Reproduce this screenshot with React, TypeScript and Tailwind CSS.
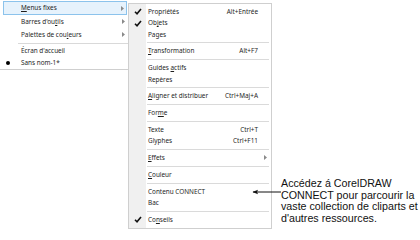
import React from "react";

type Item =
  | { kind: "sep" }
  | {
      kind: "item";
      label: React.ReactNode;
      check?: boolean;
      sc?: string;
      sub?: boolean;
    };

const U = ({ c }: { c: string }) => (
  <span className="underline underline-offset-[1px] decoration-[0.6px]">{c}</span>
);

const rightItems: Item[] = [
  { kind: "item", label: <>Propriétés</>, check: true, sc: "Alt+Entrée" },
  { kind: "item", label: <>Ob<U c="j" />ets</>, check: true },
  { kind: "item", label: <>Pages</> },
  { kind: "sep" },
  { kind: "item", label: <><U c="T" />ransformation</>, sc: "Alt+F7" },
  { kind: "sep" },
  { kind: "item", label: <>Guides <U c="a" />ctifs</> },
  { kind: "item", label: <>Repères</> },
  { kind: "sep" },
  { kind: "item", label: <><U c="A" />ligner et distribuer</>, sc: "Ctrl+Maj+A" },
  { kind: "sep" },
  { kind: "item", label: <>For<U c="m" />e</> },
  { kind: "sep" },
  { kind: "item", label: <>Texte</>, sc: "Ctrl+T" },
  { kind: "item", label: <>Glyphes</>, sc: "Ctrl+F11" },
  { kind: "sep" },
  { kind: "item", label: <><U c="E" />ffets</>, sub: true },
  { kind: "sep" },
  { kind: "item", label: <><U c="C" />ouleur</> },
  { kind: "sep" },
  { kind: "item", label: <>Contenu CONNECT</> },
  { kind: "item", label: <>Bac</> },
  { kind: "sep" },
  { kind: "item", label: <>Co<U c="n" />seils</>, check: true },
];

const Check = () => (
  <svg width="8" height="7" viewBox="0 0 8 7">
    <path d="M1 3.8 L3 5.8 L7 1" fill="none" stroke="#111" strokeWidth="1.6" />
  </svg>
);

const Tri = () => (
  <svg width="3" height="5" viewBox="0 0 3 5">
    <path d="M0 0 L3 2.5 L0 5 Z" fill="#8a8a8a" />
  </svg>
);

export default function App() {
  return (
    <div
      className="w-[420px] h-[240px] bg-white flex items-start overflow-hidden text-[#1e1e1e]"
      style={{ fontFamily: '"Noto Sans", "Open Sans", sans-serif' }}
    >
      {/* Left menu */}
      <div className="w-[128px] shrink-0 bg-white border-b border-[#cfcfcf] text-[6.4px] flex flex-col pt-[1px]">
        <div className="h-[14px] mx-[3px] mr-[1px] border border-[#8cc3ec] bg-[#e6f2fc] flex items-center pl-[17px] pr-[2px]">
          <span className="flex-1"><U c="M" />enus fixes</span>
          <Tri />
        </div>
        <div className="h-[13px] flex items-center pl-[21px] pr-[3px]">
          <span className="flex-1">Barres d'ou<U c="t" />ils</span>
          <Tri />
        </div>
        <div className="h-[13px] flex items-center pl-[21px] pr-[3px]">
          <span className="flex-1">Palettes de cou<U c="l" />eurs</span>
          <Tri />
        </div>
        <div className="h-[4px] flex items-center pl-[18px]">
          <div className="h-px w-full bg-[#d9d9d9]" />
        </div>
        <div className="h-[12px] flex items-center pl-[21px]">Écran d'accueil</div>
        <div className="h-[12px] flex items-center">
          <div className="w-[21px] flex justify-center pr-[5px]">
            <div className="w-[4px] h-[4px] rounded-full bg-black" />
          </div>
          <span>Sans nom-1*</span>
        </div>
      </div>

      {/* Right menu */}
      <div className="w-[144px] shrink-0 mt-[3px] border border-[#cfcfcf] bg-white text-[6.4px] flex">
        <div className="flex flex-col w-full">
          <div className="h-[2px] flex">
            <div className="w-[17px] bg-[#f0f0f0]" />
          </div>
          {rightItems.map((it, i) =>
            it.kind === "sep" ? (
              <div key={i} className="h-[5.4px] flex items-center">
                <div className="w-[17px] self-stretch bg-[#f0f0f0]" />
                <div className="flex-1 h-px bg-[#dadada] ml-[1px] mr-[2px]" />
              </div>
            ) : (
              <div key={i} className="h-[11.4px] flex items-center">
                <div className="w-[17px] self-stretch bg-[#f0f0f0] flex items-center justify-center pl-[1px]">
                  {it.check ? <Check /> : null}
                </div>
                <span className="flex-1 pl-[2px] whitespace-nowrap">{it.label}</span>
                {it.sc ? <span className="pr-[13px] whitespace-nowrap">{it.sc}</span> : null}
                {it.sub ? (
                  <span className="pr-[4px] flex items-center">
                    <Tri />
                  </span>
                ) : null}
              </div>
            )
          )}
          <div className="h-[2.5px] flex">
            <div className="w-[17px] bg-[#f0f0f0]" />
          </div>
        </div>
      </div>

      {/* Callout */}
      <div className="ml-[-20px] mt-[178px] flex items-start">
        <svg width="29" height="10" viewBox="0 0 29 10" className="mt-[9px] shrink-0">
          <line x1="1" y1="5" x2="29" y2="5" stroke="#111" strokeWidth="1" />
          <path d="M0.5 5 L6 2.8 L5 5 L6 7.2 Z" fill="#111" />
        </svg>
        <div
          className="text-[10.7px] leading-[11.7px] text-[#111] whitespace-nowrap"
          style={{ fontFamily: '"Liberation Sans", Arial, sans-serif' }}
        >
          Accédez á CorelDRAW
          <br />
          CONNECT pour parcourir la
          <br />
          vaste collection de cliparts et
          <br />
          d'autres ressources.
        </div>
      </div>
    </div>
  );
}
